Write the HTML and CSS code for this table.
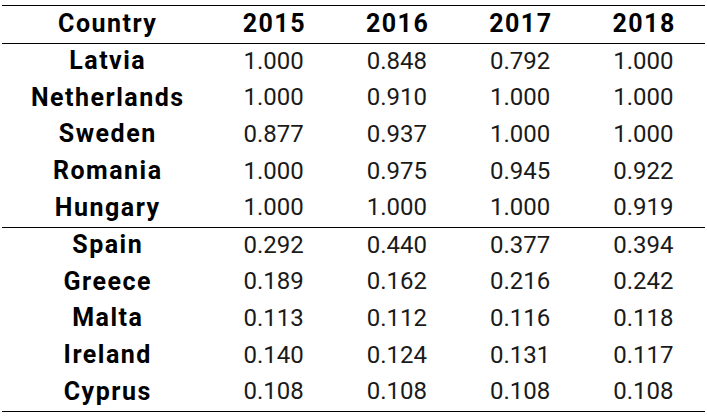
FILE: index.html
```html
<!DOCTYPE html>
<html>
<head>
<meta charset="utf-8">
<link rel="stylesheet" href="styles.css">
</head>
<body>
<div class="table">
  <div class="row head">
    <div class="cell">Country</div><div class="cell">2015</div><div class="cell">2016</div><div class="cell">2017</div><div class="cell">2018</div>
  </div>
  <div class="row"><div class="cell name">Latvia</div><div class="cell">1.000</div><div class="cell">0.848</div><div class="cell">0.792</div><div class="cell">1.000</div></div>
  <div class="row"><div class="cell name">Netherlands</div><div class="cell">1.000</div><div class="cell">0.910</div><div class="cell">1.000</div><div class="cell">1.000</div></div>
  <div class="row"><div class="cell name">Sweden</div><div class="cell">0.877</div><div class="cell">0.937</div><div class="cell">1.000</div><div class="cell">1.000</div></div>
  <div class="row"><div class="cell name">Romania</div><div class="cell">1.000</div><div class="cell">0.975</div><div class="cell">0.945</div><div class="cell">0.922</div></div>
  <div class="row group-end"><div class="cell name">Hungary</div><div class="cell">1.000</div><div class="cell">1.000</div><div class="cell">1.000</div><div class="cell">0.919</div></div>
  <div class="row"><div class="cell name">Spain</div><div class="cell">0.292</div><div class="cell">0.440</div><div class="cell">0.377</div><div class="cell">0.394</div></div>
  <div class="row"><div class="cell name">Greece</div><div class="cell">0.189</div><div class="cell">0.162</div><div class="cell">0.216</div><div class="cell">0.242</div></div>
  <div class="row"><div class="cell name">Malta</div><div class="cell">0.113</div><div class="cell">0.112</div><div class="cell">0.116</div><div class="cell">0.118</div></div>
  <div class="row"><div class="cell name">Ireland</div><div class="cell">0.140</div><div class="cell">0.124</div><div class="cell">0.131</div><div class="cell">0.117</div></div>
  <div class="row group-end"><div class="cell name">Cyprus</div><div class="cell">0.108</div><div class="cell">0.108</div><div class="cell">0.108</div><div class="cell">0.108</div></div>
</div>
</body>
</html>
```
FILE: styles.css
```css
html, body {
  margin: 0;
  padding: 0;
  background: #fff;
}
body {
  font-family: Roboto, "Liberation Sans", sans-serif;
  color: #1a1a1a;
}
.table {
  width: 703px;
  margin: 5px 2px 0;
  border-top: 1px solid #000;
}
.row {
  display: grid;
  grid-template-columns: 210px repeat(4, 1fr);
  height: 36.6px;
  align-items: center;
  font-size: 24px;
  font-weight: 400;
}
.row.head {
  height: 37px;
  border-bottom: 1px solid #000;
  color: #000;
}
.row.group-end {
  border-bottom: 1px solid #000;
}
.cell {
  text-align: center;
  line-height: 1;
  padding-bottom: 3px;
}
.row.head .cell,
.cell.name {
  font-weight: 700;
  font-size: 25px;
  letter-spacing: 1.5px;
  text-indent: 1.5px;
  color: #000;
}
```
